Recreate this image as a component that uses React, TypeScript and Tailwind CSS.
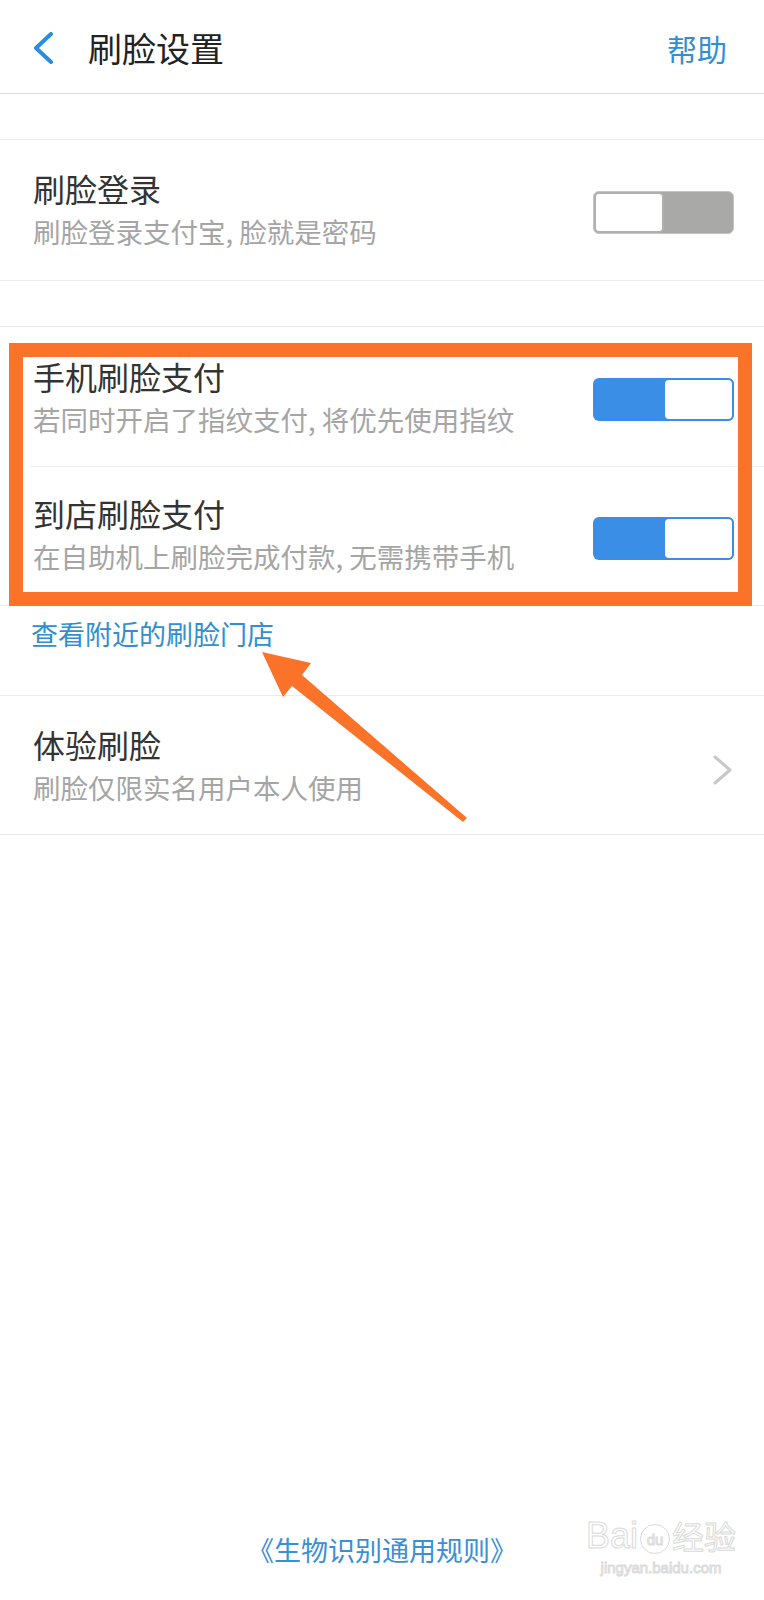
import type { ReactNode } from 'react';

const FONT = '"Noto Sans CJK SC", "Noto Sans", sans-serif';

function Toggle({ on }: { on: boolean }) {
  if (on) {
    return (
      <div className="mt-[5px] flex h-[43px] w-[141px] shrink-0 overflow-hidden rounded-[6px] bg-[#3a8ee6]">
        <div className="ml-auto h-full w-[71px] rounded-[6px] border-2 border-[#3a8ee6] bg-white" />
      </div>
    );
  }
  return (
    <div className="mt-[5px] flex h-[43px] w-[141px] shrink-0 overflow-hidden rounded-[6px] border border-[#c4c4c4] bg-[#a9aaa8]">
      <div className="h-full w-[70px] rounded-[5px] border-2 border-[#b0b0b0] bg-white" />
    </div>
  );
}

function ChevronRight() {
  return (
    <svg width="22" height="30" viewBox="0 0 22 30" className="mt-[10px] shrink-0">
      <polyline points="3,2 18,15 3,28" fill="none" stroke="#c8c8c8" strokeWidth="3" strokeLinecap="round" strokeLinejoin="round" />
    </svg>
  );
}

interface RowProps {
  title: string;
  desc: string;
  right: ReactNode;
  height?: string;
  textShift?: string;
}

function SettingRow({ title, desc, right, height = 'h-[140px]', textShift = '' }: RowProps) {
  return (
    <div className={`flex ${height} items-center justify-between bg-white pl-[33px] pr-[30px]`}>
      <div className={`flex flex-col ${textShift}`}>
        <span className="text-[32px] leading-none text-[#333333]">{title}</span>
        <span className="mt-[14px] text-[27.5px] leading-none text-[#a5a5a5]">{desc}</span>
      </div>
      {right}
    </div>
  );
}

export default function App() {
  return (
    <div className="relative flex h-[1600px] w-[764px] flex-col overflow-hidden bg-white" style={{ fontFamily: FONT }}>
      {/* Header */}
      <div className="flex h-[94px] shrink-0 items-center border-b border-[#dcdcdc] pl-[33px] pr-[37px] pt-[2px]">
        <svg width="22" height="32" viewBox="0 0 22 32" className="shrink-0">
          <polyline points="18,2 3,16 18,30" fill="none" stroke="#2b8de2" strokeWidth="4" strokeLinecap="round" strokeLinejoin="round" />
        </svg>
        <span className="ml-[33px] text-[34px] leading-none text-[#222222]">刷脸设置</span>
        <span className="ml-auto text-[30px] leading-none text-[#2f8fd6]">帮助</span>
      </div>

      <div className="h-[46px] shrink-0 border-b border-[#ececec]" />

      <div className="border-b border-[#ececec]">
        <SettingRow title="刷脸登录" desc="刷脸登录支付宝, 脸就是密码" right={<Toggle on={false} />} height="h-[140px]" textShift="mb-[2px]" />
      </div>

      <div className="h-[46px] shrink-0 border-b border-[#ececec]" />

      <div className="border-b border-[#ececec]">
        <SettingRow title="手机刷脸支付" desc="若同时开启了指纹支付, 将优先使用指纹" right={<Toggle on />} height="h-[139px]" />
        <div className="ml-[30px] h-px bg-[#f0f0f0]" />
        <SettingRow title="到店刷脸支付" desc="在自助机上刷脸完成付款, 无需携带手机" right={<Toggle on />} height="h-[138px]" textShift="mb-[5px]" />
      </div>

      <div className="h-[90px] shrink-0 border-b border-[#ececec] pl-[31px] pt-[14px]">
        <span className="text-[27px] leading-none text-[#2f90d0]">查看附近的刷脸门店</span>
      </div>

      <div className="border-b border-[#ececec]">
        <SettingRow title="体验刷脸" desc="刷脸仅限实名用户本人使用" right={<ChevronRight />} height="h-[138px]" />
      </div>

      <div className="mt-auto flex justify-center pb-[37px]">
        <span className="text-[27px] leading-none text-[#3a8fd6]">《生物识别通用规则》</span>
      </div>

      {/* Annotation: orange highlight box */}
      <div className="pointer-events-none absolute left-[9px] top-[343px] h-[263px] w-[743px] border-[14px] border-[#fa7329]" />

      {/* Annotation: arrow */}
      <svg className="pointer-events-none absolute left-0 top-0" width="764" height="1600" viewBox="0 0 764 1600">
        <polygon points="262,652 311,663 302,675 467,818 463,822 292,686 283,697" fill="#fa7329" />
      </svg>

      {/* Watermark */}
      <div
        className="pointer-events-none absolute left-[586px] top-[1518px] flex flex-col items-center text-white [-webkit-text-stroke:1px_#dadada]"
        style={{ fontFamily: '"Liberation Sans", "Noto Sans CJK SC", sans-serif' }}
      >
        <div className="flex items-end">
          <span className="text-[36px] leading-none">Bai</span>
          <span className="mx-[2px] flex h-[30px] w-[30px] items-center justify-center rounded-full border border-[#dadada] text-[15px] leading-none">du</span>
          <span className="text-[32px] leading-none">经验</span>
        </div>
        <span className="mt-[6px] text-[15px] leading-none">jingyan.baidu.com</span>
      </div>
    </div>
  );
}
